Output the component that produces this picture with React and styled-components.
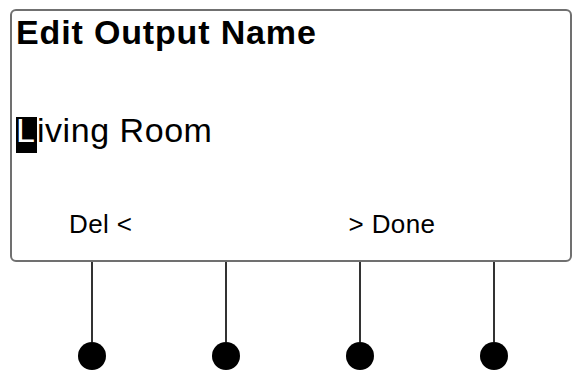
import React from 'react'
import styled, { createGlobalStyle } from 'styled-components'

const Global = createGlobalStyle`
  html, body {
    margin: 0;
    padding: 0;
    background: #ffffff;
  }
  body {
    font-family: 'Liberation Sans', Arial, Helvetica, sans-serif;
    color: #000;
  }
`

const Page = styled.div`
  width: 576px;
  height: 373px;
  padding: 9px 0 0 10px;
  box-sizing: border-box;
  overflow: hidden;
`

const Screen = styled.div`
  width: 562px;
  height: 253px;
  box-sizing: border-box;
  border: 2px solid #707070;
  border-radius: 6px;
  padding: 1px 0 0 4px;
  display: flex;
  flex-direction: column;
`

const Title = styled.div`
  font-size: 34px;
  font-weight: 700;
  line-height: 40px;
  height: 40px;
  letter-spacing: 0.85px;
  white-space: nowrap;
`

const NameLine = styled.div`
  margin-top: 58px;
  font-size: 34px;
  line-height: 40px;
  height: 40px;
  letter-spacing: 0.55px;
  white-space: nowrap;
`

const Cursor = styled.span`
  display: inline-block;
  background: #000;
  color: #fff;
  line-height: 26px;
  padding: 0 2px 10px 0;
  letter-spacing: 0;
  vertical-align: baseline;
`

const Keys = styled.div`
  margin-top: 59px;
  display: flex;
  gap: 216px;
  padding-left: 53px;
  font-size: 26px;
  line-height: 30px;
  letter-spacing: 0.4px;
  white-space: nowrap;
`

const Key = styled.span``

const Leads = styled.div`
  display: flex;
  padding-left: 15px;
`

const Lead = styled.div`
  width: 134px;
  display: flex;
  flex-direction: column;
  align-items: center;
`

const Stem = styled.div`
  width: 2px;
  height: 80px;
  background: #333;
`

const Dot = styled.div`
  width: 28px;
  height: 28px;
  border-radius: 50%;
  background: #000;
`

export default function App() {
  return (
    <Page>
      <Global />
      <Screen>
        <Title>Edit Output Name</Title>
        <NameLine>
          <Cursor>L</Cursor>iving Room
        </NameLine>
        <Keys>
          <Key>Del &lt;</Key>
          <Key>&gt; Done</Key>
        </Keys>
      </Screen>
      <Leads>
        {[0, 1, 2, 3].map((i) => (
          <Lead key={i}>
            <Stem />
            <Dot />
          </Lead>
        ))}
      </Leads>
    </Page>
  )
}
